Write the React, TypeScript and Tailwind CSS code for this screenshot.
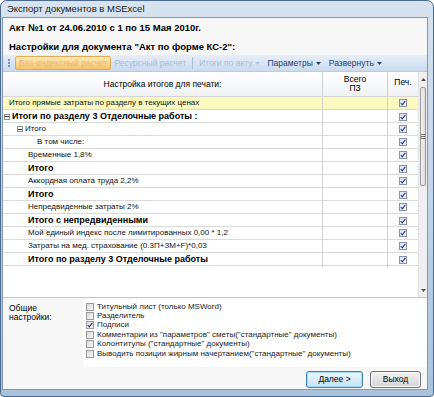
import React from 'react';

interface TotalRow {
  label: string;
  bold?: boolean;
  indent: number;
  toggle?: boolean;
  highlight?: boolean;
}

const rows: TotalRow[] = [
  { label: 'Итого прямые затраты по разделу в текущих ценах', indent: 6, highlight: true },
  { label: 'Итоги по разделу 3 Отделочные работы :', indent: 1, toggle: true, bold: true },
  { label: 'Итого', indent: 14, toggle: true },
  { label: 'В том числе:', indent: 34 },
  { label: 'Временные 1,8%', indent: 25 },
  { label: 'Итого', indent: 25, bold: true },
  { label: 'Аккордная оплата труда 2,2%', indent: 25 },
  { label: 'Итого', indent: 25, bold: true },
  { label: 'Непредвиденные затраты 2%', indent: 25 },
  { label: 'Итого с непредвиденными', indent: 25, bold: true },
  { label: 'Мой единый индекс после лимитированных 0,00 * 1,2', indent: 25 },
  { label: 'Затраты на мед. страхование (0.3П+ЗМ+F)*0,03', indent: 25 },
  { label: 'Итого по разделу 3 Отделочные работы', indent: 25, bold: true },
];

const options = [
  { label: 'Титульный лист (только MSWord)', checked: false },
  { label: 'Разделитель', checked: false },
  { label: 'Подписи', checked: true },
  { label: 'Комментарии из "параметров" сметы("стандартные" документы)', checked: false },
  { label: 'Колонтитулы ("стандартные" документы)', checked: false },
  { label: 'Выводить позиции жирным начертанием("стандартные" документы)', checked: false },
];

function GridCheck() {
  return (
    <span className="w-[8px] h-[8px] border border-[#8792ad] bg-gradient-to-br from-[#dfe3ee] to-[#f7f8fb] flex items-center justify-center">
      <svg width="6" height="6" viewBox="0 0 6 6">
        <path d="M0.8 3.2 L2.3 4.8 L5.3 0.8" stroke="#2c3f8c" strokeWidth="1.2" fill="none" />
      </svg>
    </span>
  );
}

function OptionCheck({ checked }: { checked: boolean }) {
  return (
    <span className="w-[8px] h-[8px] shrink-0 border border-[#9a9a9a] bg-gradient-to-br from-[#dcdcdc] to-[#f6f6f6] flex items-center justify-center">
      {checked && (
        <svg width="6" height="6" viewBox="0 0 6 6">
          <path d="M0.8 3.2 L2.3 4.8 L5.3 0.8" stroke="#33408a" strokeWidth="1.2" fill="none" />
        </svg>
      )}
    </span>
  );
}

function Toggle() {
  return (
    <span className="w-[6px] h-[6px] border border-[#8e8e8e] bg-white flex items-center justify-center mr-[2px]">
      <span className="w-[4px] h-px bg-[#333]" />
    </span>
  );
}

function Caret({ faded }: { faded?: boolean }) {
  return (
    <svg width="5" height="3" viewBox="0 0 5 3" className="ml-[3px]">
      <path d="M0 0 H5 L2.5 3 Z" fill={faded ? '#b3c4db' : '#25426f'} />
    </svg>
  );
}

export default function App() {
  return (
    <div className="w-[434px] h-[397px] flex flex-col rounded-t-[7px] rounded-b-[4px] border border-[#49698f] bg-gradient-to-b from-[#d7e3ef] via-[#c2d4e7] to-[#aac2dc] font-['Liberation_Sans',sans-serif] text-black overflow-hidden">
      {/* Title bar */}
      <div className="h-[16px] flex items-center pl-[6px] text-[9.5px] text-[#1b1b1b]">
        Экспорт документов в MSExcel
      </div>

      {/* Client area */}
      <div className="flex-1 ml-[1px] mr-[5px] mb-[6px] flex flex-col bg-[#f7f7f7] border border-[#8197b3]">
        {/* Document heading */}
        <div className="h-[37px] flex flex-col pl-[6px] pt-[4px] gap-[7px] text-[9.5px] font-bold">
          <div className="h-[12px] leading-[12px]">Акт №1 от 24.06.2010 с 1 по 15 Мая 2010г.</div>
          <div className="h-[12px] leading-[12px]">Настройки для документа "Акт по форме КС-2":</div>
        </div>

        {/* Toolbar */}
        <div className="h-[17px] flex items-center bg-gradient-to-b from-[#e6eef8] to-[#cbdaee] text-[8.5px] border-b border-[#b9cbe3]">
          <div className="w-[12px] flex flex-col items-center gap-[1px]">
            <span className="w-[2px] h-[2px] bg-[#7a93b8]" />
            <span className="w-[2px] h-[2px] bg-[#7a93b8]" />
            <span className="w-[2px] h-[2px] bg-[#7a93b8]" />
          </div>
          <div className="h-[14px] px-[3px] flex items-center rounded-[2px] border border-[#e2ab55] bg-gradient-to-b from-[#fde9b4] to-[#f7c568] text-[#e9b680]">
            Баз-индексный расчет
          </div>
          <div className="h-[14px] px-[3px] flex items-center text-[#a9bedb]">Ресурсный расчет</div>
          <span className="w-px h-[12px] bg-[#aebfd6] mx-[3px]" />
          <div className="h-[14px] px-[3px] flex items-center text-[#a9bedb]">
            Итоги по акту
            <Caret faded />
          </div>
          <div className="h-[14px] px-[4px] flex items-center text-[#1f3f75]">
            Параметры
            <Caret />
          </div>
          <div className="h-[14px] px-[4px] flex items-center text-[#1f3f75]">
            Развернуть
            <Caret />
          </div>
        </div>

        {/* Grid */}
        <div className="h-[226px] flex bg-white border-b border-[#c7c7c7]">
          <div className="flex-1 flex flex-col">
            <div className="h-[25px] grid grid-cols-[320px_65px_30px] bg-gradient-to-b from-white to-[#f1f2f4] border-b border-[#d5d5d5] text-[8.5px]">
              <div className="flex items-center justify-center border-r border-[#cfcfcf]">
                Настройка итогов для печати:
              </div>
              <div className="flex flex-col items-center justify-center leading-[9px] border-r border-[#cfcfcf]">
                <span>Всего</span>
                <span>ПЗ</span>
              </div>
              <div className="flex items-start justify-center pt-[4px]">Печ.</div>
            </div>
            {rows.map((row, i) => (
              <div
                key={i}
                className={`h-[13px] grid grid-cols-[320px_65px_30px] border-b border-[#dadada] ${
                  row.highlight ? 'bg-[#fbf9bd]' : 'bg-white'
                }`}
              >
                <div
                  className={`flex items-center border-r border-[#d0d0d0] ${
                    row.bold ? 'font-bold text-[9px]' : 'text-[8px] text-[#111]'
                  }`}
                  style={{ paddingLeft: row.indent }}
                >
                  {row.toggle && <Toggle />}
                  {row.label}
                </div>
                <div className="border-r border-[#d0d0d0]" />
                <div className="flex items-center justify-center">
                  <GridCheck />
                </div>
              </div>
            ))}
          </div>
          {/* Scrollbar */}
          <div className="w-[11px] flex flex-col bg-[#f0f0f0] border-l border-[#e2e2e2]">
            <div className="h-[15px] flex items-center justify-center">
              <svg width="5" height="3" viewBox="0 0 5 3">
                <path d="M0 3 H5 L2.5 0 Z" fill="#555" />
              </svg>
            </div>
            <div className="h-[99px] mx-px rounded-[2px] border border-[#979797] bg-gradient-to-r from-[#f3f3f3] to-[#dcdcdc] flex flex-col items-center justify-center gap-px">
              <span className="w-[4px] h-px bg-[#777]" />
              <span className="w-[4px] h-px bg-[#777]" />
              <span className="w-[4px] h-px bg-[#777]" />
            </div>
            <div className="flex-1" />
            <div className="h-[13px] flex items-center justify-center">
              <svg width="5" height="3" viewBox="0 0 5 3">
                <path d="M0 0 H5 L2.5 3 Z" fill="#555" />
              </svg>
            </div>
          </div>
        </div>

        {/* General settings */}
        <div className="h-[68px] flex mt-px">
          <div className="w-[80px] pl-[6px] pt-[5px] text-[8.5px] leading-[9px]">
            <div>Общие</div>
            <div>настройки:</div>
          </div>
          <div className="flex-1 bg-white flex flex-col pt-[3px] pl-[3px] text-[8px] text-[#222]">
            {options.map((o) => (
              <label key={o.label} className="h-[9.4px] flex items-center gap-[3px] leading-none">
                <OptionCheck checked={o.checked} />
                <span>{o.label}</span>
              </label>
            ))}
          </div>
        </div>

        {/* Buttons */}
        <div className="flex-1 flex items-center justify-end gap-[7px] pr-[6px] pt-[2px]">
          <button className="w-[57px] h-[17px] rounded-[3px] border border-[#3c7fb1] bg-gradient-to-b from-[#eaf6fd] to-[#c4e3f6] text-[8.5px] shadow-[inset_0_0_0_1px_#a6dbf7]">
            Далее &gt;
          </button>
          <button className="w-[51px] h-[17px] rounded-[3px] border border-[#707070] bg-gradient-to-b from-[#f2f2f2] to-[#d5d5d5] text-[8.5px] shadow-[inset_0_0_0_1px_#fafafa]">
            Выход
          </button>
        </div>
      </div>
    </div>
  );
}
